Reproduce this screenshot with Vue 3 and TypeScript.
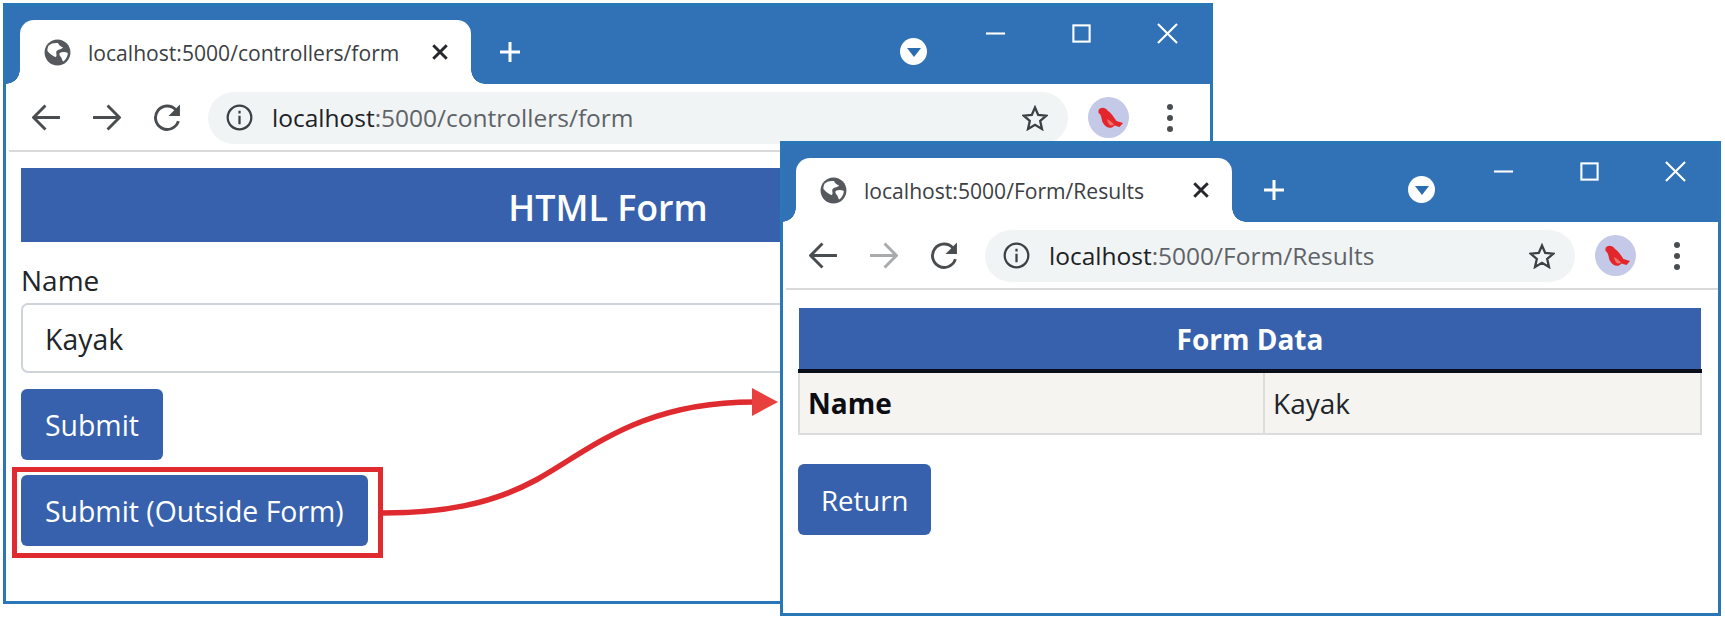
<script setup lang="ts">
interface BrowserWindow {
  id: string
  url: string
  host: string
  path: string
  forwardEnabled: boolean
}

const windows: BrowserWindow[] = [
  { id: 'form', url: 'localhost:5000/controllers/form', host: 'localhost', path: ':5000/controllers/form', forwardEnabled: true },
  { id: 'results', url: 'localhost:5000/Form/Results', host: 'localhost', path: ':5000/Form/Results', forwardEnabled: false }
]
</script>

<template>
  <div class="canvas">
    <section v-for="win in windows" :key="win.id" class="window" :class="`window-${win.id}`">
      <div class="tabstrip">
        <div class="tab">
          <svg class="globe" viewBox="0 0 24 24" aria-hidden="true">
            <circle cx="12" cy="12" r="11.5" fill="#55595e" />
            <path d="M4 6 C6.5 3.5 10 3.2 12.5 3.6 C13 5.5 15 7 17 7.5 C15 9.5 12 9 11 11 C10.5 13 12 14.5 10.5 16 C8.5 15.5 4.5 13 3 10.5 C3 9 3.3 7.3 4 6 Z" fill="#fff" />
            <path d="M14 12.5 C16 11.2 19 11.2 21.2 12.5 C21 15.5 19.5 18.5 17 20 C16 18.8 16 17.2 15 16 C14 15 13.2 13.5 14 12.5 Z" fill="#fff" />
          </svg>
          <span class="tab-title">{{ win.url }}</span>
          <svg class="tab-close" viewBox="0 0 16 16" aria-hidden="true">
            <path d="M2 2 L14 14 M14 2 L2 14" />
          </svg>
        </div>
        <svg class="new-tab" viewBox="0 0 22 22" aria-hidden="true">
          <path d="M11 1 V21 M1 11 H21" />
        </svg>
        <div class="spacer"></div>
        <div class="caret-badge">
          <span class="caret"></span>
        </div>
        <div class="controls">
          <div class="control">
            <svg viewBox="0 0 22 22" aria-hidden="true"><path d="M1 11 H21" /></svg>
          </div>
          <div class="control">
            <svg viewBox="0 0 22 22" aria-hidden="true"><rect x="2.5" y="2.5" width="17" height="17" /></svg>
          </div>
          <div class="control">
            <svg viewBox="0 0 22 22" aria-hidden="true"><path d="M1 1 L21 21 M21 1 L1 21" /></svg>
          </div>
        </div>
      </div>

      <div class="toolbar">
        <svg class="nav" viewBox="0 0 28 28" aria-hidden="true">
          <path d="M27 14 H2 M13 2.5 L1.5 14 L13 25.5" />
        </svg>
        <svg class="nav" :class="{ 'nav-off': !win.forwardEnabled }" viewBox="0 0 28 28" aria-hidden="true">
          <path d="M1 14 H26 M15 2.5 L26.5 14 L15 25.5" />
        </svg>
        <svg class="nav" viewBox="0 0 28 28" aria-hidden="true">
          <path d="M24.5 17.5 A11.3 11.3 0 1 1 22 6.5" />
          <path class="solid" d="M26 1.5 V12.5 H15 Z" />
        </svg>
        <div class="omnibox">
          <svg class="info" viewBox="0 0 24 24" aria-hidden="true">
            <circle cx="12" cy="12" r="10.5" />
            <path d="M12 10.5 V18 M12 6 V8.4" />
          </svg>
          <span class="url"><b>{{ win.host }}</b>{{ win.path }}</span>
          <svg class="star" viewBox="0 0 26 26" aria-hidden="true">
            <path d="M13 2.5 L16.2 10 L24.3 10.7 L18.2 16 L20 24 L13 19.8 L6 24 L7.8 16 L1.7 10.7 L9.8 10 Z" />
          </svg>
        </div>
        <div class="avatar">
          <svg viewBox="0 0 41 41" aria-hidden="true">
            <path d="M10.5 13 C13 9.5 17.5 10.5 19.5 13.5 C23 15.5 26 20.5 28.5 24 L35 26 L31.5 30 L26.5 28.5 C23 32.5 18 31 15 26 C13 22 14 18 10.5 16 Z" fill="#e2262c" />
            <path d="M19 22 C21 23 24 25 26 27.5 C23 30 20 28 19 22 Z" fill="#f0736a" />
          </svg>
        </div>
        <div class="kebab"><i></i><i></i><i></i></div>
      </div>

      <div v-if="win.id === 'form'" class="page page-form">
        <h1 class="banner">HTML Form</h1>
        <label class="field-label">Name</label>
        <div class="input">Kayak</div>
        <button class="btn" type="button">Submit</button>
        <div class="outlined">
          <button class="btn" type="button">Submit (Outside Form)</button>
          <span class="callout"></span>
        </div>
      </div>

      <div v-else class="page page-results">
        <table class="data">
          <colgroup>
            <col class="key-col" />
            <col />
          </colgroup>
          <thead>
            <tr><th colspan="2">Form Data</th></tr>
          </thead>
          <tbody>
            <tr>
              <th class="key">Name</th>
              <td>Kayak</td>
            </tr>
          </tbody>
        </table>
        <button class="btn" type="button">Return</button>
      </div>
    </section>

    <svg class="arrow" viewBox="0 0 1725 621" aria-hidden="true">
      <path class="arrow-line" d="M383 513 C440 513 490 505 536 480 C590 450 640 402 754 402" />
      <path class="arrow-head" d="M752 388 L778 402 L752 416 Z" />
    </svg>
  </div>
</template>

<style>
html, body {
  margin: 0;
  background: #fff;
}
</style>

<style scoped>
.canvas {
  position: relative;
  width: 1725px;
  height: 621px;
  overflow: hidden;
  font-family: "Open Sans", "Noto Sans", sans-serif;
  color: #212529;
}

/* Windows sit on a free canvas, second one overlaps the first */
.window {
  position: absolute;
  box-sizing: border-box;
  display: flex;
  flex-direction: column;
  background: #fff;
  border: 3px solid #2a77b8;
}

.window-form {
  left: 3px;
  top: 3px;
  width: 1210px;
  height: 601px;
}

.window-results {
  left: 780px;
  top: 141px;
  width: 941px;
  height: 475px;
  z-index: 2;
}

.tabstrip {
  display: flex;
  align-items: flex-end;
  height: 78px;
  flex: none;
  padding-left: 14px;
  background: #3072b5;
}

.window-results .tabstrip {
  height: 78px;
  padding-left: 13px;
}

.tab {
  position: relative;
  box-sizing: border-box;
  display: flex;
  align-items: center;
  width: 451px;
  height: 64px;
  padding: 0 22px 0 24px;
  background: #fff;
  border-radius: 14px 14px 0 0;
}

.window-results .tab {
  width: 436px;
}

.tab::before,
.tab::after {
  content: "";
  position: absolute;
  bottom: 0;
  width: 14px;
  height: 14px;
}

.tab::before {
  left: -14px;
  background: radial-gradient(circle at 0 0, #3072b5 13.5px, #fff 14px);
}

.tab::after {
  right: -14px;
  background: radial-gradient(circle at 100% 0, #3072b5 13.5px, #fff 14px);
}

.globe {
  width: 27px;
  height: 27px;
  flex: none;
}

.tab-title {
  flex: 1;
  margin-left: 17px;
  font-size: 21.1px;
  white-space: nowrap;
  color: #3c4043;
}

.tab-close {
  width: 18px;
  height: 18px;
  flex: none;
  fill: none;
  stroke: #26282b;
  stroke-width: 2.6;
}

.new-tab {
  align-self: center;
  width: 22px;
  height: 22px;
  margin: 14px 0 0 28px;
  flex: none;
  fill: none;
  stroke: #fff;
  stroke-width: 3;
}

.window-results .new-tab {
  margin-left: 31px;
}

.spacer {
  flex: 1;
}

.caret-badge {
  align-self: center;
  display: flex;
  align-items: center;
  justify-content: center;
  width: 27px;
  height: 27px;
  margin: 12px 25px 0 0;
  flex: none;
  border-radius: 50%;
  background: #fff;
}

.caret {
  width: 0;
  height: 0;
  margin-top: 3px;
  border-left: 7px solid transparent;
  border-right: 7px solid transparent;
  border-top: 9px solid #2a6cb0;
}

.controls {
  display: flex;
  align-self: flex-start;
  margin-top: 17px;
}

.control {
  display: flex;
  justify-content: center;
  width: 86px;
}

.control svg {
  width: 21px;
  height: 21px;
  fill: none;
  stroke: #fff;
  stroke-width: 2.2;
}

.toolbar {
  display: flex;
  align-items: center;
  box-sizing: border-box;
  height: 68px;
  flex: none;
  margin-left: 3px;
  padding: 1px 0 0 23px;
  border-bottom: 2px solid #d9d9d9;
}

.nav {
  width: 29px;
  height: 29px;
  margin-right: 31px;
  flex: none;
  fill: none;
  stroke: #4a4d50;
  stroke-width: 2.8;
}

.nav:nth-child(2) {
  margin-right: 32px;
}

.nav:nth-child(3) {
  margin-right: 26px;
}

.nav .solid {
  fill: #4a4d50;
  stroke: none;
}

.nav-off {
  stroke: #a8aaac;
}

.omnibox {
  display: flex;
  align-items: center;
  box-sizing: border-box;
  width: 860px;
  height: 52px;
  padding: 0 20px 0 18px;
  flex: none;
  border-radius: 26px;
  background: #f1f4f5;
}

.window-results .omnibox {
  width: 590px;
}

.info {
  width: 27px;
  height: 27px;
  flex: none;
  fill: none;
  stroke: #3c4043;
  stroke-width: 2;
}

.url {
  flex: 1;
  margin-left: 19px;
  font-size: 24.5px;
  white-space: nowrap;
  color: #5f6368;
}

.url b {
  font-weight: 400;
  color: #202124;
}

.star {
  width: 26px;
  height: 26px;
  flex: none;
  fill: none;
  stroke: #3c4043;
  stroke-width: 2.3;
}

.avatar {
  width: 41px;
  height: 41px;
  margin-left: 20px;
  flex: none;
  border-radius: 50%;
  background: #c3c9e6;
}

.avatar svg {
  display: block;
  width: 41px;
  height: 41px;
}

.kebab {
  display: flex;
  flex-direction: column;
  align-items: center;
  gap: 5px;
  margin-left: 38px;
}

.kebab i {
  width: 6px;
  height: 6px;
  border-radius: 50%;
  background: #4a4d50;
}

.page {
  display: flex;
  flex-direction: column;
  align-items: flex-start;
}

.page-form {
  padding: 16px 15px 0;
}

.banner {
  box-sizing: border-box;
  width: 100%;
  height: 74px;
  margin: 0;
  font-size: 35.8px;
  font-weight: 600;
  line-height: 78px;
  text-align: center;
  color: #fff;
  background: #3761ac;
}

.field-label {
  height: 61px;
  font-size: 28px;
  line-height: 76px;
}

.input {
  box-sizing: border-box;
  width: 100%;
  height: 70px;
  margin-bottom: 16px;
  padding-left: 22px;
  font-size: 28.4px;
  line-height: 68px;
  border: 2px solid #ced4da;
  border-radius: 7px;
}

.btn {
  box-sizing: border-box;
  height: 71px;
  padding: 0 24px;
  font-family: inherit;
  font-size: 28.4px;
  color: #fff;
  white-space: nowrap;
  background: #3761ac;
  border: 0;
  border-radius: 6px;
}

.page-results .btn {
  padding: 0 23px;
  font-size: 27.6px;
}

.outlined {
  position: relative;
  display: flex;
  margin-top: 15px;
}

.callout {
  position: absolute;
  inset: -8px -15px -12px -9px;
  border: 5px solid #df2a2f;
  pointer-events: none;
}

.page-results {
  padding: 18px 15px 0;
}

.data {
  width: 904px;
  margin-bottom: 29px;
  border-collapse: collapse;
  table-layout: fixed;
  font-size: 28px;
}

.key-col {
  width: 465px;
}

.data thead th {
  height: 61px;
  padding: 0;
  font-size: 28px;
  font-weight: 700;
  color: #fff;
  background: #3761ac;
  border-bottom: 4px solid #0b0f1c;
}

.data tbody th,
.data tbody td {
  height: 60px;
  padding: 0 8px;
  text-align: left;
  background: #f5f4f0;
  border: 2px solid #dcdcdc;
}

.data .key {
  font-weight: 700;
  color: #0b0d12;
}

.arrow {
  position: absolute;
  inset: 0;
  width: 1725px;
  height: 621px;
  z-index: 1;
  pointer-events: none;
}

.arrow-line {
  fill: none;
  stroke: #df2a2f;
  stroke-width: 5.5;
}

.arrow-head {
  fill: #e8403f;
}
</style>
